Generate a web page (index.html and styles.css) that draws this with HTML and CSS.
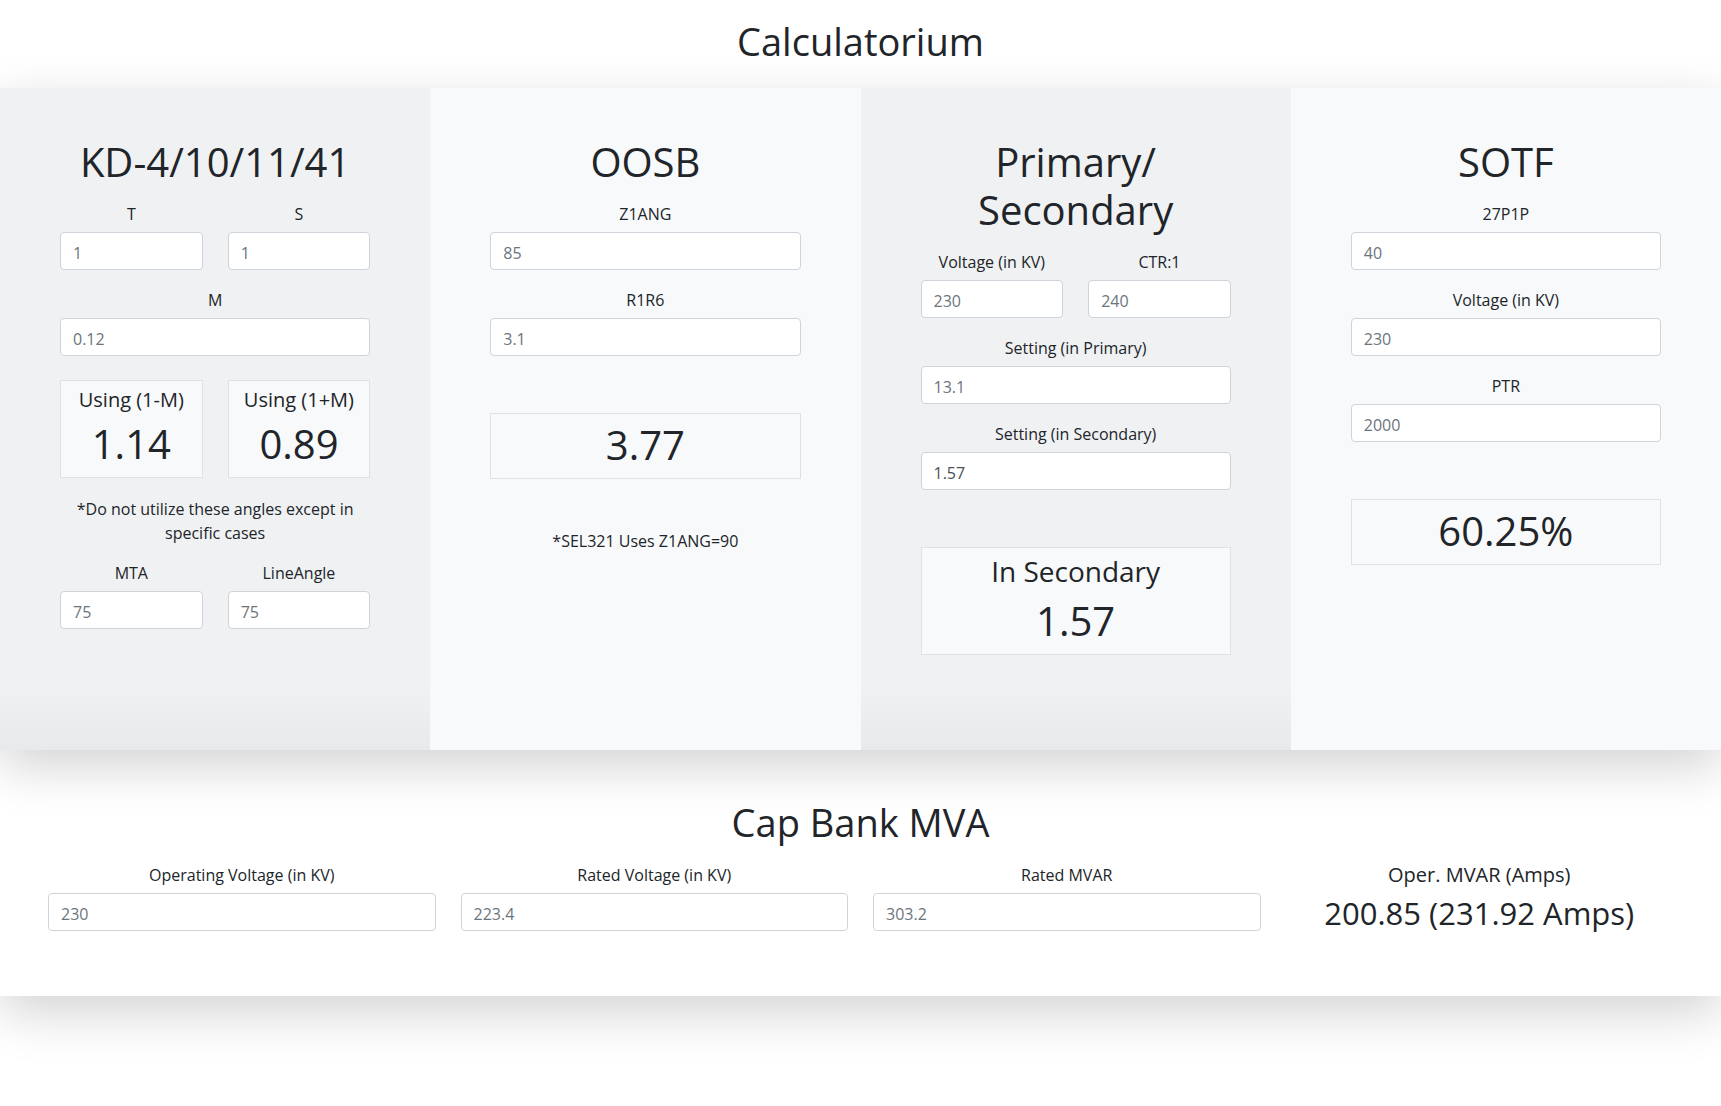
FILE: index.html
```html
<!DOCTYPE html>
<html>
<head>
    <title>Calculatorium</title>
    <link rel="stylesheet" href="styles.css">
</head>
<body>
    <h1 class="page-title">Calculatorium</h1>

    <div class="panels">
        <!-- KD -->
        <section class="panel panel-gray">
            <h1 class="panel-title">KD-4/10/11/41</h1>
            <div class="pair">
                <div class="field">
                    <label>T</label>
                    <input type="text" placeholder="1">
                </div>
                <div class="field">
                    <label>S</label>
                    <input type="text" placeholder="1">
                </div>
            </div>
            <div class="field">
                <label>M</label>
                <input type="text" placeholder="0.12">
            </div>
            <div class="pair result-pair">
                <div class="result">
                    <h5 class="result-label">Using (1-M)</h5>
                    <div class="result-value">1.14</div>
                </div>
                <div class="result">
                    <h5 class="result-label">Using (1+M)</h5>
                    <div class="result-value">0.89</div>
                </div>
            </div>
            <p class="note note-kd">*Do not utilize these angles except in specific cases</p>
            <div class="pair">
                <div class="field">
                    <label>MTA</label>
                    <input type="text" placeholder="75">
                </div>
                <div class="field">
                    <label>LineAngle</label>
                    <input type="text" placeholder="75">
                </div>
            </div>
        </section>

        <!-- OOSB -->
        <section class="panel panel-light">
            <h1 class="panel-title">OOSB</h1>
            <div class="field">
                <label>Z1ANG</label>
                <input type="text" placeholder="85">
            </div>
            <div class="field">
                <label>R1R6</label>
                <input type="text" placeholder="3.1">
            </div>
            <div class="result result-single">
                <div class="result-value">3.77</div>
            </div>
            <p class="note note-oosb">*SEL321 Uses Z1ANG=90</p>
        </section>

        <!-- Primary / Secondary -->
        <section class="panel panel-gray">
            <h1 class="panel-title">Primary/ Secondary</h1>
            <div class="pair">
                <div class="field">
                    <label>Voltage (in KV)</label>
                    <input type="text" placeholder="230">
                </div>
                <div class="field">
                    <label>CTR:1</label>
                    <input type="text" placeholder="240">
                </div>
            </div>
            <div class="field">
                <label>Setting (in Primary)</label>
                <input type="text" placeholder="13.1">
            </div>
            <div class="field">
                <label>Setting (in Secondary)</label>
                <input type="text" value="1.57">
            </div>
            <div class="result result-single">
                <h3 class="result-label result-label-lg">In Secondary</h3>
                <div class="result-value">1.57</div>
            </div>
        </section>

        <!-- SOTF -->
        <section class="panel panel-light">
            <h1 class="panel-title">SOTF</h1>
            <div class="field">
                <label>27P1P</label>
                <input type="text" placeholder="40">
            </div>
            <div class="field">
                <label>Voltage (in KV)</label>
                <input type="text" placeholder="230">
            </div>
            <div class="field">
                <label>PTR</label>
                <input type="text" placeholder="2000">
            </div>
            <div class="result result-single">
                <div class="result-value">60.25%</div>
            </div>
        </section>
    </div>

    <div class="capbank">
        <h1 class="section-title">Cap Bank MVA</h1>
        <div class="cap-grid">
            <div class="field">
                <label>Operating Voltage (in KV)</label>
                <input type="text" placeholder="230">
            </div>
            <div class="field">
                <label>Rated Voltage (in KV)</label>
                <input type="text" placeholder="223.4">
            </div>
            <div class="field">
                <label>Rated MVAR</label>
                <input type="text" placeholder="303.2">
            </div>
            <div class="cap-output">
                <h5 class="result-label">Oper. MVAR (Amps)</h5>
                <div class="cap-value">200.85 (231.92 Amps)</div>
            </div>
        </div>
    </div>
</body>
</html>
```

FILE: styles.css
```css
body {
    margin: 0;
    padding-bottom: 110px;
    font-family: "Open Sans", "Noto Sans", sans-serif;
    font-size: 16px;
    line-height: 1.5;
    color: #212529;
    background: #fff;
}

h1, h3, h5, p {
    font-weight: 400;
}

.page-title {
    font-size: 38px;
    line-height: 43px;
    text-align: center;
    margin: 20px 0 25px;
}

.panels {
    display: grid;
    grid-template-columns: repeat(4, 1fr);
    height: 662px;
    box-shadow: 0 1rem 3rem rgba(0, 0, 0, 0.175);
}

.panel {
    padding: 50px 60px 48px;
    text-align: center;
}

.panel-gray {
    background: linear-gradient(to bottom, #f0f1f3 calc(100% - 60px), #e8e9eb 100%);
}

.panel-light {
    background: #f8f9fa;
}

.panel-title {
    font-size: 40px;
    line-height: 48px;
    margin: 0 0 16px;
}

.field {
    margin-bottom: 18px;
}

.field label {
    display: block;
    line-height: 24px;
    margin-bottom: 6px;
}

.field input {
    display: block;
    width: 100%;
    height: 38px;
    box-sizing: border-box;
    padding: 8px 12px 4px;
    font-family: inherit;
    font-size: 16px;
    line-height: 1.5;
    color: #495057;
    background: #fff;
    border: 1px solid #ced4da;
    border-radius: 4px;
}

.field input::placeholder {
    color: #6c757d;
}

.pair {
    display: grid;
    grid-template-columns: 1fr 1fr;
    column-gap: 25px;
}

.result-pair {
    margin-top: 24px;
}

.result {
    background: #f8f9fa;
    border: 1px solid #dee2e6;
    padding: 7px 8px 9px;
}

.result-single {
    margin-top: 57px;
}

.result-label {
    font-size: 20px;
    line-height: 24px;
    margin: 0 0 8px;
}

.result-label-lg {
    font-size: 28px;
    line-height: 1.2;
}

.result-value {
    font-size: 40px;
    line-height: 48px;
}

.note {
    margin: 0;
    line-height: 24px;
}

.note-kd {
    margin: 19px 0 16px;
}

.note-oosb {
    margin-top: 50px;
}

.capbank {
    padding: 51px 48px 64px;
    text-align: center;
    box-shadow: 0 1rem 3rem rgba(0, 0, 0, 0.175);
}

.section-title {
    font-size: 38px;
    line-height: 43px;
    margin: 0 0 19px;
}

.cap-grid {
    display: grid;
    grid-template-columns: repeat(4, 1fr);
    column-gap: 25px;
}

.cap-grid .field {
    margin-bottom: 0;
}

.cap-value {
    font-size: 31px;
    line-height: 1.2;
}
```
